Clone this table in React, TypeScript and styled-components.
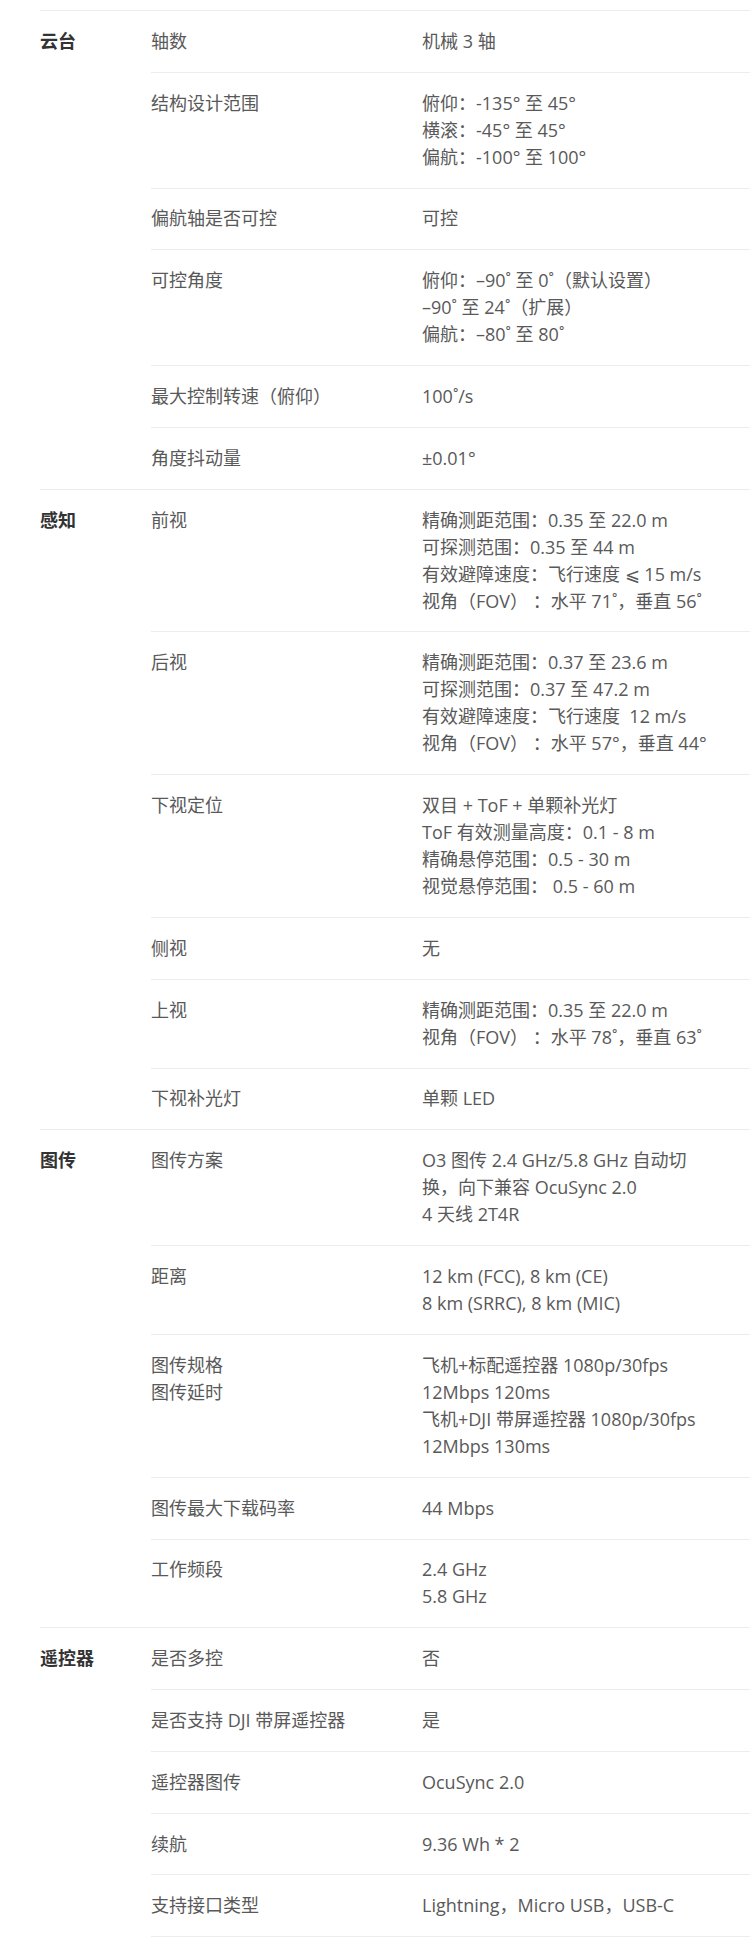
import React from 'react';
import styled, { createGlobalStyle } from 'styled-components';

interface SpecRow {
  label: string[];
  value: string[];
}

interface SpecGroup {
  title: string;
  rows: SpecRow[];
}

const specs: SpecGroup[] = [
  {
    title: '云台',
    rows: [
      { label: ['轴数'], value: ['机械 3 轴'] },
      {
        label: ['结构设计范围'],
        value: ['俯仰：-135° 至 45°', '横滚：-45° 至 45°', '偏航：-100° 至 100°'],
      },
      { label: ['偏航轴是否可控'], value: ['可控'] },
      {
        label: ['可控角度'],
        value: ['俯仰：–90˚ 至 0˚（默认设置）', '–90˚ 至 24˚（扩展）', '偏航：–80˚ 至 80˚'],
      },
      { label: ['最大控制转速（俯仰）'], value: ['100˚/s'] },
      { label: ['角度抖动量'], value: ['±0.01°'] },
    ],
  },
  {
    title: '感知',
    rows: [
      {
        label: ['前视'],
        value: [
          '精确测距范围：0.35 至 22.0 m',
          '可探测范围：0.35 至 44 m',
          '有效避障速度：飞行速度 ⩽ 15 m/s',
          '视角（FOV） ：水平 71˚，垂直 56˚',
        ],
      },
      {
        label: ['后视'],
        value: [
          '精确测距范围：0.37 至 23.6 m',
          '可探测范围：0.37 至 47.2 m',
          '有效避障速度：飞行速度  12 m/s',
          '视角（FOV） ：水平 57°，垂直 44°',
        ],
      },
      {
        label: ['下视定位'],
        value: [
          '双目 + ToF + 单颗补光灯',
          'ToF 有效测量高度：0.1 - 8 m',
          '精确悬停范围：0.5 - 30 m',
          '视觉悬停范围： 0.5 - 60 m',
        ],
      },
      { label: ['侧视'], value: ['无'] },
      {
        label: ['上视'],
        value: ['精确测距范围：0.35 至 22.0 m', '视角（FOV） ：水平 78˚，垂直 63˚'],
      },
      { label: ['下视补光灯'], value: ['单颗 LED'] },
    ],
  },
  {
    title: '图传',
    rows: [
      {
        label: ['图传方案'],
        value: ['O3 图传 2.4 GHz/5.8 GHz 自动切', '换，向下兼容 OcuSync 2.0', '4 天线 2T4R'],
      },
      {
        label: ['距离'],
        value: ['12 km (FCC), 8 km (CE)', '8 km (SRRC), 8 km (MIC)'],
      },
      {
        label: ['图传规格', '图传延时'],
        value: [
          '飞机+标配遥控器 1080p/30fps',
          '12Mbps 120ms',
          '飞机+DJI 带屏遥控器 1080p/30fps',
          '12Mbps 130ms',
        ],
      },
      { label: ['图传最大下载码率'], value: ['44 Mbps'] },
      { label: ['工作频段'], value: ['2.4 GHz', '5.8 GHz'] },
    ],
  },
  {
    title: '遥控器',
    rows: [
      { label: ['是否多控'], value: ['否'] },
      { label: ['是否支持 DJI 带屏遥控器'], value: ['是'] },
      { label: ['遥控器图传'], value: ['OcuSync 2.0'] },
      { label: ['续航'], value: ['9.36 Wh * 2'] },
      { label: ['支持接口类型'], value: ['Lightning，Micro USB，USB-C'] },
    ],
  },
];

const GlobalStyle = createGlobalStyle`
  html, body {
    margin: 0;
    padding: 0;
    background: #fff;
  }
  body {
    font-family: 'Open Sans', 'Noto Sans CJK SC', sans-serif;
    -webkit-font-smoothing: antialiased;
  }
`;

const StyledPage = styled.div`
  width: 750px;
  padding: 10px 0 0 40px;
  box-sizing: border-box;
`;

const StyledGroup = styled.section`
  display: grid;
  grid-template-columns: 111px 1fr;
  border-top: 1px solid #ededed;
`;

const StyledGroupTitle = styled.div`
  padding-top: 17px;
  color: #333;
  font-size: 18px;
  font-weight: 700;
  line-height: 27px;
`;

const StyledRows = styled.div<{ $closed: boolean }>`
  display: flex;
  flex-direction: column;
  border-bottom: ${(props) => (props.$closed ? '1px solid #ededed' : 'none')};
`;

const StyledRow = styled.div`
  display: grid;
  grid-template-columns: 271px 1fr;
  padding: 16.9px 0;
  & + & {
    border-top: 1px solid #ededed;
  }
`;

const StyledLabel = styled.div`
  color: #595959;
  font-size: 18px;
  line-height: 27px;
`;

const StyledValue = styled.div`
  padding-right: 38px;
  color: #595959;
  font-size: 18px;
  line-height: 27px;
`;

const StyledLine = styled.div`
  white-space: pre;
`;

const App = () => {
  return (
    <>
      <GlobalStyle />
      <StyledPage>
        {specs.map((group, gi) => (
          <StyledGroup key={group.title}>
            <StyledGroupTitle>{group.title}</StyledGroupTitle>
            <StyledRows $closed={gi === specs.length - 1}>
              {group.rows.map((row) => (
                <StyledRow key={row.label.join('')}>
                  <StyledLabel>
                    {row.label.map((text) => (
                      <StyledLine key={text}>{text}</StyledLine>
                    ))}
                  </StyledLabel>
                  <StyledValue>
                    {row.value.map((text) => (
                      <StyledLine key={text}>{text}</StyledLine>
                    ))}
                  </StyledValue>
                </StyledRow>
              ))}
            </StyledRows>
          </StyledGroup>
        ))}
      </StyledPage>
    </>
  );
};

export default App;
